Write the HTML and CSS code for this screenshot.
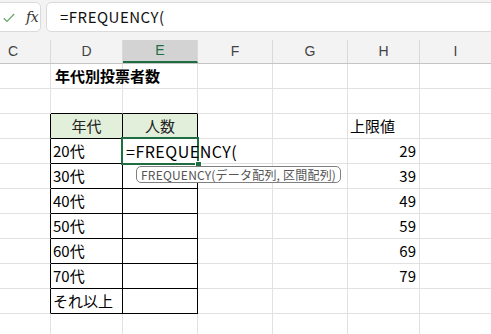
FILE: index.html
```html
<!DOCTYPE html>
<html lang="ja">
<head>
<meta charset="utf-8">
<link rel="stylesheet" href="styles.css">
</head>
<body>
<div class="app">
  <div class="fbar">
    <div class="tools">
      <svg class="check" width="12" height="10" viewBox="0 0 12 10"><path d="M0.8 5.2 L4 8.4 L11.2 1" fill="none" stroke="#6aa86a" stroke-width="1.3"/></svg>
      <span class="fx">fx</span>
    </div>
    <div class="formula">=FREQUENCY(</div>
  </div>
  <div class="colheads">
    <div class="ch">C</div>
    <div class="ch">D</div>
    <div class="ch sel">E</div>
    <div class="ch">F</div>
    <div class="ch">G</div>
    <div class="ch">H</div>
    <div class="ch last">I</div>
  </div>
  <div class="sheet">
    <!-- row 1 -->
    <div class="c"></div><div class="c title">年代別投票者数</div><div class="c"></div><div class="c"></div><div class="c"></div><div class="c"></div><div class="c"></div>
    <!-- row 2 -->
    <div class="c"></div><div class="c bb"></div><div class="c bb"></div><div class="c"></div><div class="c"></div><div class="c"></div><div class="c"></div>
    <!-- row 3 -->
    <div class="c br"></div><div class="c t th">年代</div><div class="c t th">人数</div><div class="c"></div><div class="c"></div><div class="c">上限値</div><div class="c"></div>
    <!-- row 4 -->
    <div class="c br"></div><div class="c t">20代</div>
    <div class="c t active"><span class="ctext">=FREQUENCY(</span><span class="handle"></span><span class="tip">FREQUENCY(データ配列, 区間配列)</span></div>
    <div class="c"></div><div class="c"></div><div class="c num">29</div><div class="c"></div>
    <!-- row 5 -->
    <div class="c br"></div><div class="c t">30代</div><div class="c t"></div><div class="c"></div><div class="c"></div><div class="c num">39</div><div class="c"></div>
    <!-- row 6 -->
    <div class="c br"></div><div class="c t">40代</div><div class="c t"></div><div class="c"></div><div class="c"></div><div class="c num">49</div><div class="c"></div>
    <!-- row 7 -->
    <div class="c br"></div><div class="c t">50代</div><div class="c t"></div><div class="c"></div><div class="c"></div><div class="c num">59</div><div class="c"></div>
    <!-- row 8 -->
    <div class="c br"></div><div class="c t">60代</div><div class="c t"></div><div class="c"></div><div class="c"></div><div class="c num">69</div><div class="c"></div>
    <!-- row 9 -->
    <div class="c br"></div><div class="c t">70代</div><div class="c t"></div><div class="c"></div><div class="c"></div><div class="c num">79</div><div class="c"></div>
    <!-- row 10 -->
    <div class="c br"></div><div class="c t">それ以上</div><div class="c t"></div><div class="c"></div><div class="c"></div><div class="c"></div><div class="c"></div>
    <!-- row 11 -->
    <div class="c"></div><div class="c"></div><div class="c"></div><div class="c"></div><div class="c"></div><div class="c"></div><div class="c"></div>
  </div>
</div>
</body>
</html>
```
FILE: styles.css
```css
* { box-sizing: border-box; }
html, body { margin: 0; padding: 0; }
body {
  width: 491px;
  height: 334px;
  overflow: hidden;
  background: #f3f3f3;
  font-family: "Noto Sans CJK JP", "Noto Sans", sans-serif;
  color: #000;
}
.app { width: 491px; overflow: hidden; }

.fbar {
  display: flex;
  gap: 5px;
  height: 40px;
  padding-top: 2px;
  padding-bottom: 8px;
  margin-left: -6px;
  margin-right: -10px;
}
.tools {
  width: 47px;
  background: #fff;
  border: 1px solid #dadada;
  border-radius: 5px;
  display: flex;
  align-items: center;
  padding-left: 8px;
  gap: 11px;
}
.check { display: block; margin-top: 2px; }
.fx {
  font-family: "DejaVu Serif", "Liberation Serif", serif;
  font-style: italic;
  font-size: 14px;
  color: #333;
  letter-spacing: -0.5px;
}
.formula {
  flex: 1;
  background: #fff;
  border: 1px solid #dadada;
  border-radius: 5px;
  font-size: 15px;
  line-height: 28px;
  padding-left: 13px;
  letter-spacing: 0.5px;
  color: #111;
}

.colheads {
  display: grid;
  grid-template-columns: 51px 72px 75px 75px 75px 72px 71px;
  height: 24px;
  border-bottom: 1px solid #c4c4c4;
}
.ch {
  border-right: 1px solid #d9d9d9;
  text-align: center;
  font-family: "Liberation Sans", "Noto Sans", sans-serif;
  font-size: 14px;
  line-height: 23px;
  color: #444;
}
.ch:first-child { text-indent: -24px; }
.ch.last { border-right: none; }
.ch.sel {
  background: #d3d3d3;
  color: #1e6e41;
  border-bottom: 2px solid #1e6e41;
  line-height: 21px;
}

.sheet {
  background: #fff;
  display: grid;
  grid-template-columns: 51px 72px 75px 75px 75px 72px 71px;
  grid-auto-rows: 25px;
}
.c {
  border-right: 1px solid #e1e1e1;
  border-bottom: 1px solid #e1e1e1;
  font-size: 15px;
  line-height: 24px;
  padding-left: 2px;
  padding-right: 2px;
  white-space: nowrap;
}
.c:nth-child(7n) { border-right: none; }
.title { font-weight: bold; padding-left: 4px; overflow: visible; }
.bb { border-bottom-color: #000; }
.br { border-right-color: #000; }
.t { border-right-color: #000; border-bottom-color: #000; }
.th { background: #e2efda; text-align: center; color: #222; }
.num { text-align: right; padding-right: 3px; }

.active {
  position: relative;
  z-index: 2;
}
.active::after {
  content: "";
  position: absolute;
  left: -2px;
  top: -2px;
  right: -2px;
  bottom: -2px;
  border: 2px solid #1e6e41;
  pointer-events: none;
}
.ctext { position: relative; z-index: 1; padding-left: 1px; font-size: 16px; letter-spacing: 0.5px; }
.handle {
  position: absolute;
  right: -5px;
  bottom: -5px;
  width: 7px;
  height: 7px;
  background: #1e6e41;
  border: 1px solid #fff;
  z-index: 3;
}
.tip {
  position: absolute;
  left: 13px;
  top: 27px;
  height: 17px;
  padding: 0 4px 0 4px;
  background: #fff;
  border: 1px solid #7f7f7f;
  border-radius: 5px;
  font-size: 12px;
  line-height: 15px;
  letter-spacing: 0.2px;
  color: #555;
  z-index: 4;
}
```
